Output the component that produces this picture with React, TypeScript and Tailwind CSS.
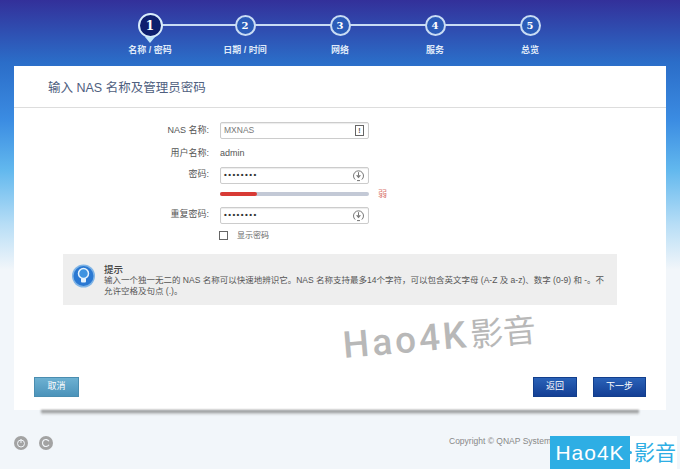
import React from 'react';

const cjk = "font-['Liberation_Sans','Noto_Sans_CJK_SC',sans-serif]";

const steps = [
  { n: 1, label: '名称 / 密码' },
  { n: 2, label: '日期 / 时间' },
  { n: 3, label: '网络' },
  { n: 4, label: '服务' },
  { n: 5, label: '总览' },
];

const Stepper = () => (
  <div className="relative mx-auto flex h-[66px] w-[450px] justify-between pt-[15px]">
    <div className="absolute left-[35px] right-[35px] top-[24px] h-[2px] bg-[#c9dcf4]" />
    {steps.map((s) => (
      <div key={s.n} className="relative flex w-[70px] flex-col items-center">
        {s.n === 1 ? (
          <div className="relative -mt-[2px] flex h-[25px] w-[25px] items-center justify-center rounded-full border-2 border-[#d8ecfb] bg-[#0e1f6e] font-['DejaVu_Serif',serif] text-[12px] font-bold text-white">
            {s.n}
            <div className="absolute -bottom-[7px] left-[5.5px] h-0 w-0 border-x-[5px] border-t-[6px] border-x-transparent border-t-[#bfe6fb]" />
          </div>
        ) : (
          <div className="flex h-[21px] w-[21px] items-center justify-center rounded-full border-2 border-[#c9dcf4] bg-[#2b5cb8] font-['DejaVu_Serif',serif] text-[10px] font-bold text-white">
            {s.n}
          </div>
        )}
        <div className={`whitespace-nowrap text-[9px] font-bold leading-[10px] text-[#dfe9f8] ${s.n === 1 ? 'mt-[7px]' : 'mt-[9px]'}`}>
          {s.label}
        </div>
      </div>
    ))}
  </div>
);

const RefreshIcon = () => (
  <svg width="13" height="13" viewBox="0 0 13 13" fill="none" stroke="#777" strokeWidth="1">
    <path d="M3.2 10.6A5 5 0 1 1 9.8 10.6" />
    <path d="M4 6.2h5L6.5 9.2z" fill="#777" stroke="none" />
    <path d="M6.5 3.2v3.4M5 11.6h3" />
  </svg>
);

const Row = ({ label, children }: { label: string; children: React.ReactNode }) => (
  <div className="flex items-center">
    <div className="w-[206px] pr-[11px] text-right text-[9px] text-[#555]">{label}</div>
    {children}
  </div>
);

const Field = ({ value, dots, icon }: { value: string; dots?: boolean; icon: React.ReactNode }) => (
  <div className="flex h-[17px] w-[149px] items-center justify-between rounded-[2px] border border-[#ccc] bg-white pl-[3px] pr-[3px] shadow-[inset_0_1px_1px_rgba(0,0,0,0.08)]">
    <span className={dots ? 'text-[8px] font-bold tracking-[1.4px] text-[#333]' : 'text-[8.5px] text-[#777]'}>{value}</span>
    {icon}
  </div>
);

const Button = ({ label, className }: { label: string; className: string }) => (
  <div className={`flex h-[20px] items-center justify-center text-[9px] text-white ${className}`}>{label}</div>
);

const navy = 'border border-[#123e8c] bg-gradient-to-b from-[#2a62b8] to-[#143f95]';

export default function App() {
  return (
    <div className={`relative h-[469px] w-[680px] overflow-hidden bg-[#f2f6fa] ${cjk}`}>
      <div className="absolute inset-x-0 top-0 h-[270px] bg-[linear-gradient(to_bottom,#33309a_0px,#2b6dc8_62px,#3b8ce2_120px,#62b8ee_170px,#b8def6_225px,#f2f6fa_270px)]" />

      <div className="relative">
        <Stepper />

        <div className="relative mx-[14px] h-[344px] bg-white">
          <div className="flex h-[42px] items-center border-b border-[#ddd] pl-[34px] pt-[3px] text-[12.5px] text-[#4f6080]">
            输入 NAS 名称及管理员密码
          </div>

          <div className="flex flex-col pt-[14px]">
            <Row label="NAS 名称:">
              <Field
                value="MXNAS"
                icon={
                  <div className="mr-[1px] flex h-[11px] w-[9px] items-center justify-center border border-[#666] text-[7px] font-bold leading-none text-[#555]">
                    !
                  </div>
                }
              />
            </Row>
            <div className="mt-[8px]">
              <Row label="用户名称:">
                <span className="text-[9px] text-[#555]">admin</span>
              </Row>
            </div>
            <div className="mt-[6px]">
              <Row label="密码:">
                <Field value="••••••••" dots icon={<RefreshIcon />} />
              </Row>
            </div>
            <div className="mt-[6px] flex items-center pl-[206px]">
              <div className="h-[4px] w-[149px] rounded-[2px] bg-[#c3c9d6]">
                <div className="h-[4px] w-[37px] rounded-[2px] bg-[#d83a35]" />
              </div>
              <span className="ml-[9px] text-[9px] leading-none text-[#d9776f]">弱</span>
            </div>
            <div className="mt-[8px]">
              <Row label="重复密码:">
                <Field value="••••••••" dots icon={<RefreshIcon />} />
              </Row>
            </div>
            <div className="mt-[6px] flex items-center pl-[205px]">
              <div className="h-[9px] w-[9px] border border-[#666] bg-white" />
              <span className="ml-[9px] text-[8px] leading-[12px] text-[#666]">显示密码</span>
            </div>
          </div>

          <div className="mx-[49px] mt-[12px] flex h-[51px] items-start bg-[#eeeeee] pl-[9px] pt-[10px]">
            <svg width="23" height="24" viewBox="0 0 23 24" className="shrink-0">
              <circle cx="11.5" cy="12" r="11.5" fill="#7fb4e6" />
              <circle cx="11.5" cy="12" r="10" fill="#2a78d2" />
              <circle cx="11.5" cy="9.5" r="5" fill="#3f93e0" stroke="#e6f3fd" strokeWidth="1.5" />
              <rect x="9" y="14" width="5" height="4.5" rx="1" fill="#e6f3fd" />
            </svg>
            <div className="ml-[9px] w-[503px] text-[8.5px] leading-[11px] text-[#555]">
              <div className="text-[9.5px] font-medium leading-[11px] text-[#444]">提示</div>
              输入一个独一无二的 NAS 名称可以快速地辨识它。NAS 名称支持最多14个字符，可以包含英文字母 (A-Z 及 a-z)、数字 (0-9) 和 -。不允许空格及句点 (.)。
            </div>
          </div>

          <div className="absolute bottom-[13px] left-[20px]">
            <Button label="取消" className="w-[45px] border border-[#4a8db0] bg-gradient-to-b from-[#6db1d2] to-[#4b93ba]" />
          </div>
          <div className="absolute bottom-[13px] right-[20px] flex gap-[16px]">
            <Button label="返回" className={`w-[44px] ${navy}`} />
            <Button label="下一步" className={`w-[53px] ${navy}`} />
          </div>
        </div>

        <div className="mx-[41px] h-[5px] bg-gradient-to-b from-[#777] to-transparent blur-[1px]" />

        <div className="mt-[21px] flex items-center pl-[14px]">
          <svg width="14" height="14" viewBox="0 0 14 14" fill="none">
            <circle cx="7" cy="7" r="7" fill="#a3a3a3" />
            <circle cx="7" cy="7.5" r="3.5" stroke="#f2f6fa" strokeWidth="1" />
            <path d="M7 3v4" stroke="#f2f6fa" strokeWidth="1" />
          </svg>
          <svg width="14" height="14" viewBox="0 0 14 14" fill="none" className="ml-[11px]">
            <circle cx="7" cy="7" r="7" fill="#a3a3a3" />
            <path d="M10 5.2A3.5 3.5 0 1 0 10 8.8" stroke="#f2f6fa" strokeWidth="1.2" />
          </svg>
          <span className="-mt-[4px] ml-[396px] whitespace-nowrap text-[8.5px] text-[#888]">Copyright © QNAP Systems, Inc.</span>
        </div>
      </div>

      {/* watermark */}
      <div className="absolute left-[343px] top-[326px] origin-left -rotate-[5deg] whitespace-nowrap font-['Roboto','Noto_Sans_CJK_SC',sans-serif] text-[37px] font-medium leading-[40px] tracking-[3px] text-[#b8b8b8]">
        Hao4K<span className="ml-[1px] text-[33px] font-normal tracking-normal">影音</span>
      </div>
      <div className="absolute bottom-0 left-[550px] flex h-[33px] w-[127px] items-center bg-white text-[21px] leading-none">
        <div className="flex h-full w-[80px] shrink-0 items-center justify-center bg-[#2eaee4] tracking-[1px] text-white">Hao4K</div>
        <div className="flex h-full items-center whitespace-nowrap text-[#2eaee4]">
          <span className="ml-[-1px] mr-[2px] h-[3px] w-[3px] shrink-0 rounded-full bg-[#2eaee4]" />
          影音
        </div>
      </div>
    </div>
  );
}
